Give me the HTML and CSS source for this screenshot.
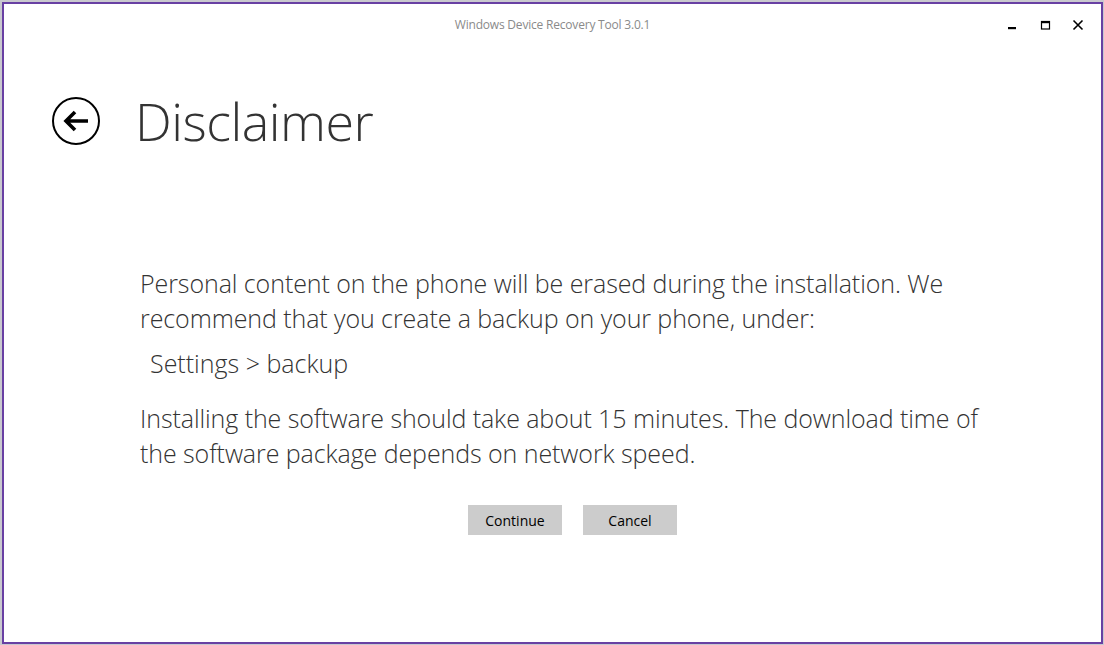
FILE: index.html
```html
<!DOCTYPE html>
<html>
<head>
<meta charset="utf-8">
<link rel="stylesheet" href="styles.css">
</head>
<body>
<div class="window">
  <div class="titlebar">
    <div></div>
    <div class="title">Windows Device Recovery Tool 3.0.1</div>
    <div class="controls">
      <span class="ctl"><svg width="12" height="12" viewBox="0 0 12 12"><rect x="2" y="8" width="8" height="2.2" fill="#000"/></svg></span>
      <span class="ctl"><svg width="12" height="12" viewBox="0 0 12 12"><rect x="2.5" y="2.5" width="8" height="7.5" fill="none" stroke="#000" stroke-width="1.2"/><rect x="2" y="2" width="9" height="2.2" fill="#000"/></svg></span>
      <span class="ctl"><svg width="12" height="12" viewBox="0 0 12 12"><path d="M1.5 1.5 L10.5 10.5 M10.5 1.5 L1.5 10.5" stroke="#000" stroke-width="1.6"/></svg></span>
    </div>
  </div>
  <div class="header">
    <svg class="back" width="50" height="50" viewBox="0 0 50 50"><circle cx="25" cy="25" r="23" fill="none" stroke="#000" stroke-width="2"/><path d="M37 25 H15 M24 16 L15 25 L24 34" fill="none" stroke="#000" stroke-width="3.6" stroke-linejoin="miter"/></svg>
    <h1 class="heading">Disclaimer</h1>
  </div>
  <div class="content">
    <p class="para">Personal content on the phone will be erased during the installation. We recommend that you create a backup on your phone, under:</p>
    <p class="path">Settings &gt; backup</p>
    <p class="para">Installing the software should take about 15 minutes. The download time of the software package depends on network speed.</p>
    <div class="buttons">
      <button class="btn">Continue</button>
      <button class="btn">Cancel</button>
    </div>
  </div>
</div>
</body>
</html>
```

FILE: styles.css
```css
html, body {
  margin: 0;
  padding: 0;
  background: #c9c9cf;
  height: 645px;
  overflow: hidden;
}
.window {
  box-sizing: border-box;
  margin: 2px 0 0 2px;
  width: 1101px;
  height: 642px;
  border: 2px solid #6840a3;
  background: #fff;
  font-family: "Open Sans", "Liberation Sans", sans-serif;
  color: #333;
}
.titlebar {
  display: grid;
  grid-template-columns: 1fr auto 1fr;
  height: 44px;
  align-items: start;
}
.title {
  padding-top: 12px;
  font-size: 12px;
  color: #8a8a8a;
  letter-spacing: -0.2px;
}
.controls {
  display: flex;
  justify-content: flex-end;
  padding-top: 15px;
  padding-right: 17px;
  gap: 21px;
}
.ctl {
  display: block;
  width: 12px;
  height: 12px;
}
.ctl svg { display: block; }
.header {
  display: flex;
  align-items: center;
  padding-left: 47px;
  height: 75px;
  margin-top: 35px;
}
.back { display: block; }
.heading {
  margin: 0 0 0 34px;
  font-size: 52px;
  font-weight: 300;
  color: #333;
  letter-spacing: -0.5px;
  line-height: 1;
}
.content {
  padding-left: 136px;
  padding-top: 108px;
  width: 865px;
}
.para {
  margin: 0;
  width: 860px;
  font-size: 25px;
  font-weight: 300;
  line-height: 35px;
  letter-spacing: -0.08px;
  color: #333;
}
.path {
  margin: 10px 0 20px 10px;
  font-size: 25px;
  font-weight: 300;
  line-height: 35px;
  color: #333;
}
.buttons {
  display: flex;
  justify-content: center;
  gap: 21px;
  margin-top: 34px;
}
.btn {
  width: 94px;
  height: 30px;
  border: none;
  background: #cccccc;
  font-family: "Open Sans", "Liberation Sans", sans-serif;
  font-size: 14px;
  color: #000;
  padding: 0;
}
```
